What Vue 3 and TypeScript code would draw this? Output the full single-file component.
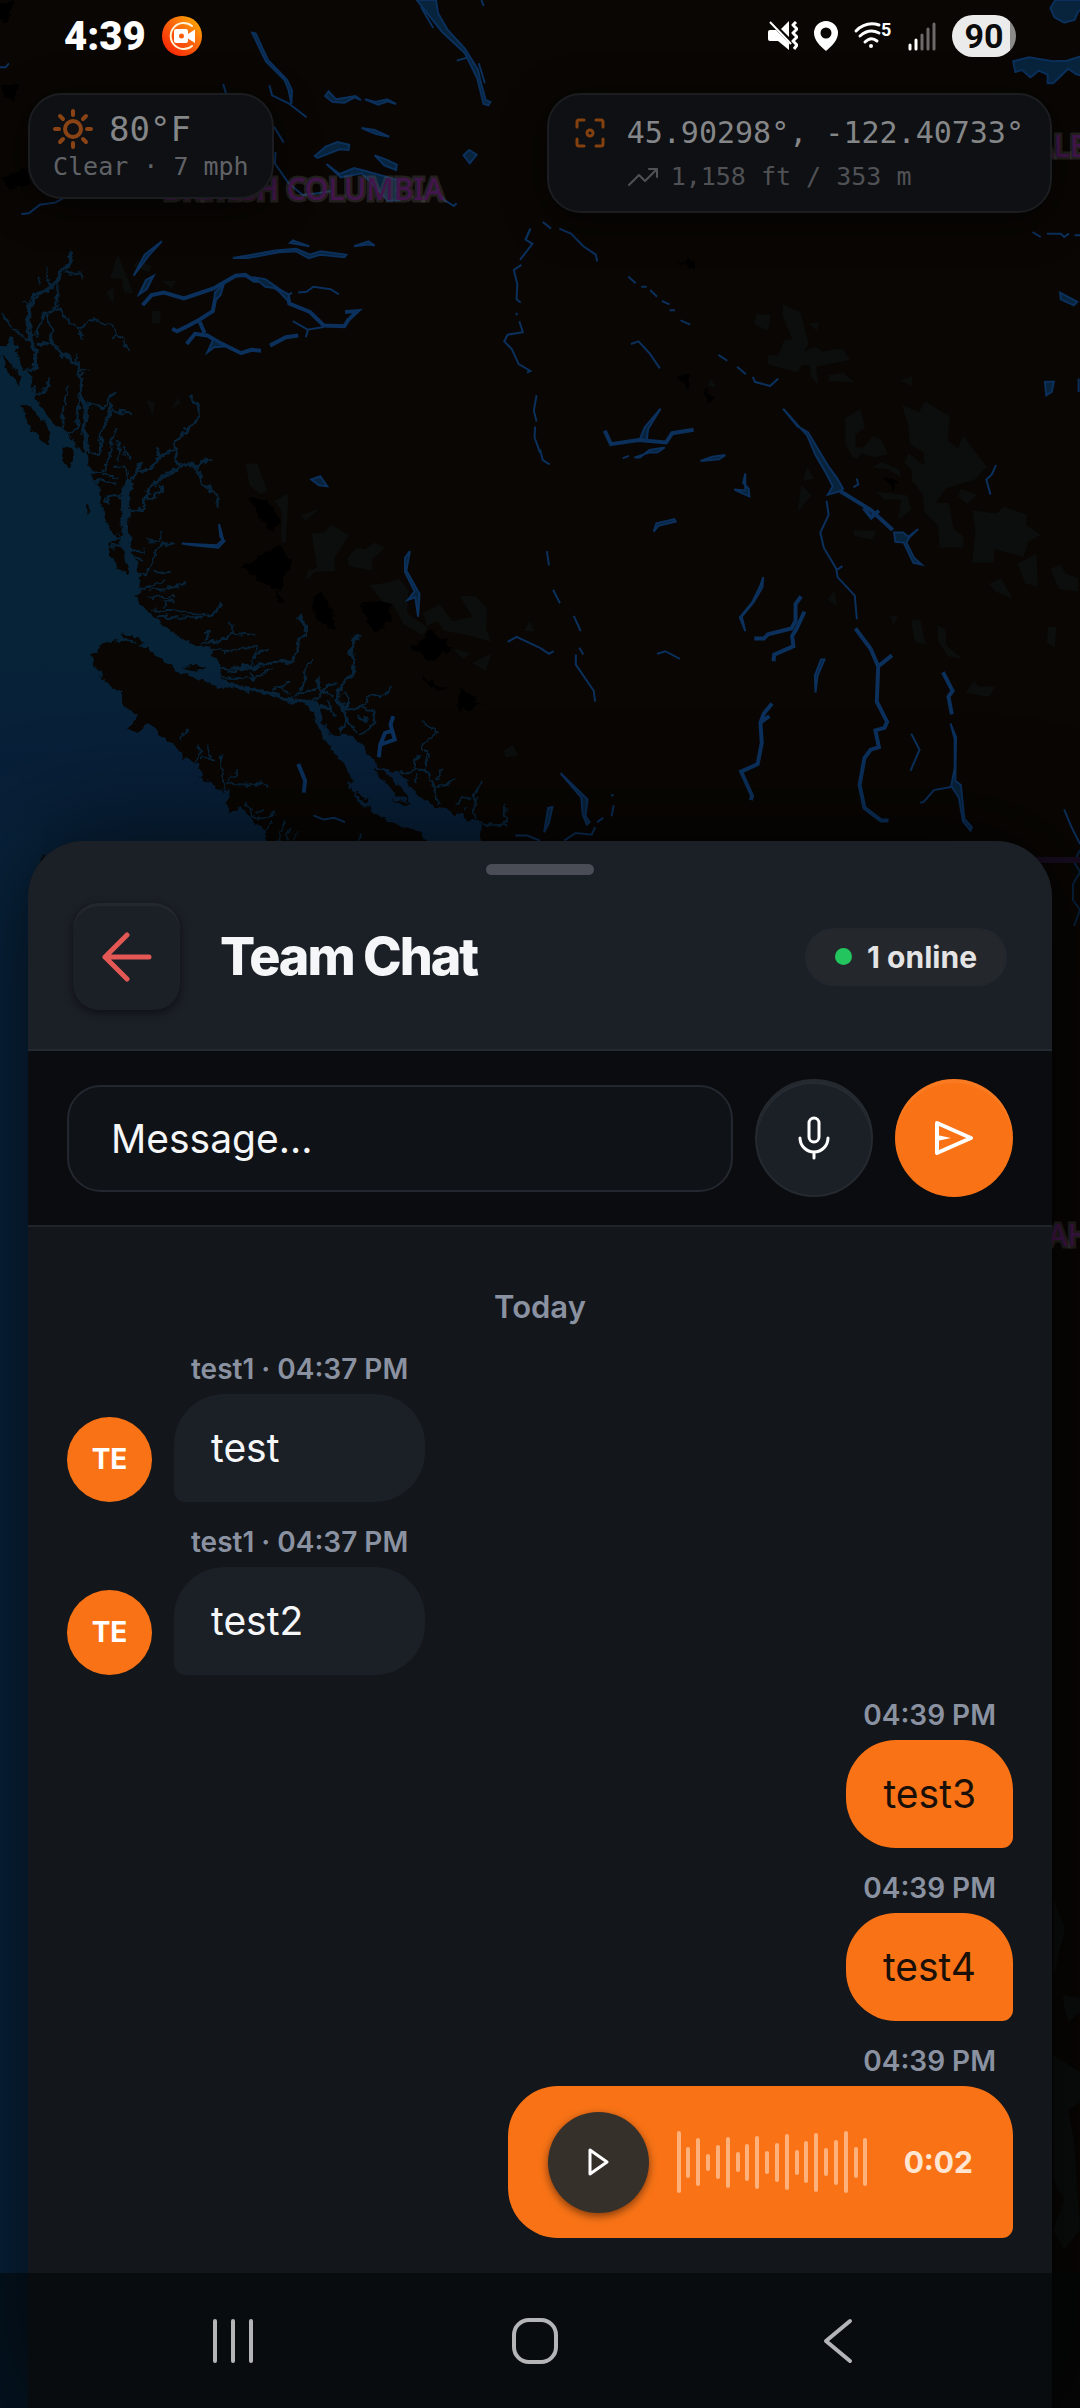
<script setup lang="ts">
interface Message {
  id: number
  time: string
  own: boolean
  author?: string
  text?: string
  voice?: string
}

const messages: Message[] = [
  { id: 1, author: 'test1', time: '04:37 PM', own: false, text: 'test' },
  { id: 2, author: 'test1', time: '04:37 PM', own: false, text: 'test2' },
  { id: 3, time: '04:39 PM', own: true, text: 'test3' },
  { id: 4, time: '04:39 PM', own: true, text: 'test4' },
  { id: 5, time: '04:39 PM', own: true, voice: '0:02' },
]

const waveform: number[] = [62, 31, 48, 17, 34, 51, 20, 37, 53, 23, 39, 56, 25, 42, 59, 28, 45, 62, 31, 48]

const initials = (name = ''): string => name.slice(0, 2).toUpperCase()
</script>

<template>
  <div class="screen">
    <svg class="map" viewBox="0 0 1080 2408" preserveAspectRatio="xMinYMin slice" aria-hidden="true">
      <defs>
        <filter id="rough" filterUnits="userSpaceOnUse" x="-40" y="0" width="1160" height="2408" color-interpolation-filters="sRGB">
          <feTurbulence type="fractalNoise" baseFrequency="0.12" numOctaves="3" seed="4" />
          <feDisplacementMap in="SourceGraphic" scale="9" xChannelSelector="R" yChannelSelector="G" />
        </filter>
        <linearGradient id="sea" gradientUnits="userSpaceOnUse" x1="0" y1="340" x2="0" y2="1600">
          <stop offset="0" stop-color="#072338" />
          <stop offset="0.6" stop-color="#072338" />
          <stop offset="0.8" stop-color="#081f38" />
          <stop offset="1" stop-color="#08233c" />
        </linearGradient>
      </defs>
      <rect width="1080" height="2408" fill="#090603" />

      <!-- coast and sea -->
      <g filter="url(#rough)">
        <g transform="translate(0 200) scale(0.3444 0.4209)">
          <path
            d="M-60 345 L20 345 34 320 52 370 66 405 86 410 102 470 150 530 196 548 232 596 252 606 262 650 290 690 300 750 330 790 352 800 356 690 376 640 380 700 374 790 388 840 410 890 395 940 425 975 470 1010 520 1036 570 1060 612 1068 650 1120 644 1140 720 1155 790 1168 840 1184 900 1188 924 1196 934 1240 966 1270 1020 1275 1066 1310 1100 1350 1160 1362 1200 1402 1240 1434 1290 1446 1350 1468 1400 1486 1390 1560 -60 1560 Z"
            fill="url(#sea)"
          />
          <path d="M-60 1500 H120 V5300 H-60 Z" fill="#08233c" />
          <g fill="#090603">
            <path d="M265 1080 L300 1058 350 1045 410 1058 462 1084 510 1116 570 1138 640 1156 720 1166 790 1182 830 1192 890 1198 912 1220 924 1256 960 1304 1000 1345 1030 1382 1008 1385 1040 1430 1100 1465 1160 1485 1220 1500 1250 1540 1240 1600 780 1600 770 1500 740 1478 700 1440 664 1458 660 1404 630 1402 590 1375 572 1332 530 1328 516 1300 480 1280 430 1240 400 1262 366 1260 405 1226 380 1212 350 1195 352 1168 300 1140 280 1110 Z" />
            <path d="M0 368 L30 385 60 418 62 440 30 420 Z" />
            <path d="M62 340 L84 348 96 380 90 406 70 402 56 370 Z" />
            <path d="M64 484 L94 496 130 530 146 550 138 588 110 562 84 536 Z" />
            <path d="M184 586 L208 590 212 616 202 640 188 624 Z" />
            <path d="M318 820 L346 800 358 840 374 888 344 876 320 850 Z" />
            <path d="M356 1032 L384 1034 420 1054 400 1056 Z M530 1110 L560 1104 596 1112 580 1120 Z M248 724 L258 728 252 748 Z" />
            <path d="M1084 1348 L1130 1368 1170 1400 1190 1430 1150 1412 1110 1378 Z M1138 1424 L1184 1430 1180 1442 Z M1034 1400 L1056 1424 1076 1420 1066 1434 1040 1420 Z" />
          </g>
        </g>

        <g class="inlet" transform="translate(0 240) scale(0.3333)">
          <path d="M216 36 L200 80 170 120 150 146 108 166 90 190 84 220 92 300 106 340 104 390" stroke-width="13" />
          <path d="M200 96 L248 108 M150 140 L136 84 M120 130 L116 110 M170 120 L174 160 168 200 188 228 240 268 276 240 330 252 350 284 372 304 386 336 M336 298 L350 284 M248 300 L240 268" />
          <path d="M168 206 L132 222 104 290 M136 222 L156 270 154 312 M110 310 L154 312 210 358 232 376 242 430 238 500 228 570" stroke-width="9" />
          <path d="M0 218 L60 284 96 306 M68 186 L88 196 M74 390 L100 394 M38 300 L20 320 M232 376 L228 344 M240 390 L266 388 M236 404 L258 400" />
          <path d="M210 440 L196 470 184 540 186 576 228 570 M192 460 L206 456 M102 470 L130 456 154 414 M102 470 L108 440" />
          <path d="M242 470 L260 500 252 560 262 640" stroke-width="14" />
          <path d="M262 496 L310 500 330 470 350 458 M330 490 L326 530 304 580 300 640 M334 512 L364 514 396 522" stroke-width="9" />
          <path d="M350 564 L336 600 340 630 310 690 270 700 M264 644 L300 640 M370 620 L388 660 M350 600 L360 640 352 660 M388 720 L376 680 340 680 M312 700 L350 716 M270 740 L300 720 352 734 M280 770 L300 740 M320 790 L330 765 380 768" stroke-width="7" />
          <path d="M382 800 L386 740 410 700 450 686 480 650 520 632 534 670 550 676 596 676 634 654 M530 630 L526 600 560 568 584 552 600 526 590 490 568 468 M480 650 L472 620 M410 700 L424 668" stroke-width="9" />
          <path d="M380 818 L430 808 438 760 480 716 548 676 M440 780 L460 766 484 756 480 732 M590 680 L606 724 640 764 656 780 658 806" stroke-width="9" />
          <path d="M400 1000 L440 1000 464 970 466 930 500 910 522 914 M438 900 L476 906 M484 876 V910 M460 996 L512 1000 M410 1056 L450 1040 492 1020 M450 1050 L500 1048 550 1036 560 1018 M440 1070 L520 1072 M450 1110 L600 1118 640 1124 662 1090 M470 1130 L600 1134 M490 1104 L494 1084 528 1084" stroke-width="6" />
          <path d="M376 740 L372 860 390 960 410 1010" stroke-width="22" />
          <path d="M332 920 H370 M400 930 L432 936 M404 950 L424 960" stroke-width="6" />
        </g>

        <g class="inlet" transform="translate(180 600) scale(0.3333)">
          <path d="M358 46 L376 80 376 104 350 124 352 160 334 186 270 188 220 200 130 208 M536 104 L510 144 526 180 518 226 480 262 474 300 496 340 500 370" stroke-width="10" />
          <path d="M120 10 L122 20 94 46 0 56 M0 34 L60 42 M70 100 L90 94 82 120 M60 130 L120 124 160 98 226 106 M152 66 L160 98 M130 160 L180 144 228 138 226 160 266 150 M226 160 L216 196 M60 140 L150 156 M140 220 L200 206 M130 232 L220 236 282 206 M220 236 L210 214" />
          <path d="M400 178 L380 192 374 230 360 270 M270 270 L310 260 326 246 M300 262 L330 282 M340 288 L380 276 420 264 440 280 460 290 M412 232 L414 262 M430 270 L450 250 466 256 M390 306 L420 290 430 270 M404 330 L446 320 466 350 M450 330 L440 300 M470 290 L500 330 540 324 574 286 610 284 636 258" stroke-width="7" />
          <path d="M270 276 L300 292 390 306 M404 320 L416 380 452 430" stroke-width="9" />
          <path d="M490 280 L504 300 500 326 M540 324 L580 330 582 370 540 406 M534 346 L556 372 M556 350 L550 370 M480 400 L500 360 530 400" stroke-width="8" />
          <path d="M724 360 L772 400 724 440 744 470 740 500 M700 510 L716 460 M660 520 L740 506 760 550 774 606 M764 560 L800 552 826 538 M770 540 L784 508 M706 550 L712 520" stroke-width="7" />
          <path d="M910 538 L890 570 880 620 890 660 M836 620 L850 590 876 596 M846 636 L860 620 M890 666 L980 680 M976 616 L976 656 960 676" stroke-width="8" />
          <path d="M0 420 L22 384 M40 480 L60 460 56 436 M60 474 L100 478 M84 440 L90 470 M122 460 L126 530 136 570 M140 550 L200 554 246 548 258 568 M150 540 L176 510 M200 610 L220 650 270 660 290 634 M230 640 L250 630 M256 690 L280 670 M290 720 L316 660 M320 720 L330 686 M340 722 L354 690 M536 696 V722" />
        </g>
      </g>

      <!-- glaciers -->
      <g filter="url(#rough)" fill="#000">
        <path d="M248 498 L268 500 280 520 274 532 258 516 Z M240 568 L280 544 292 562 280 590 266 584 Z M276 590 L286 604 280 606 Z" />
        <path d="M312 596 L320 590 332 610 334 630 316 618 Z M360 604 L390 600 392 620 374 632 Z M412 648 L430 630 454 648 430 662 Z" />
        <path d="M420 676 L446 688 436 690 Z M460 686 L466 694 482 704 458 712 Z M-4 4 L14 2 6 24 -4 20 Z M2 86 L18 84 14 100 4 96 Z M0 178 L26 168 30 184 10 190 Z" />
        <path d="M680 262 L696 260 694 270 Z M678 374 L690 376 688 388 Z M704 390 L716 396 708 402 Z M884 476 L898 482 892 490 Z M914 482 L930 484 922 494 Z M950 536 L964 540 958 546 Z" />
      </g>

      <!-- parks -->
      <g transform="translate(0 200) scale(0.3444 0.4209)" fill="#0b0e0d">
        <path d="M342 128 L388 222 360 220 354 188 320 186 Z M308 220 L330 206 330 246 Z M386 156 L400 144 440 156 434 172 Z M470 192 L512 192 498 210 Z M441 264 H466 V294 L441 292 Z" />
        <path d="M424 474 L450 482 444 514 Z M498 496 L518 468 526 484 Z M713 626 L748 626 776 690 758 700 724 678 Z M796 716 L838 696 830 814 816 814 818 738 Z M874 748 L928 734 886 764 Z" />
        <path d="M905 792 L940 790 964 772 1014 796 970 852 974 882 914 884 886 906 894 880 920 874 Z M1008 852 L1034 826 1060 830 1088 814 1118 826 1080 854 1082 880 1014 870 Z" />
        <path d="M1072 914 L1120 910 1158 900 1186 926 1182 982 1242 1016 1228 1034 1172 1008 1140 960 1110 954 Z M1228 980 L1278 960 1312 1000 1372 990 1334 940 1380 940 1414 970 1412 1020 1426 1050 1360 1034 1290 1024 1270 1000 1240 1012 Z" />
        <path d="M1316 1066 L1368 1076 1344 1090 Z M1370 1100 L1428 1076 1410 1118 Z M1522 1024 L1538 998 1552 1026 Z M1462 1308 L1490 1294 1504 1320 1468 1324 Z" />
      </g>
      <g transform="translate(540 200) scale(0.3444 0.4209)" fill="#0b0e0d">
        <path d="M628 270 L670 274 662 310 622 296 Z M706 248 L756 266 780 342 766 360 800 348 820 360 878 352 900 380 802 396 808 438 786 420 784 392 760 392 748 410 660 390 662 368 692 370 708 334 732 330 704 276 Z" />
        <path d="M780 292 L810 292 804 312 Z M838 416 L880 410 914 434 838 430 Z M1044 428 L1082 418 1080 442 Z M484 440 L498 424 512 446 Z" />
        <path d="M886 520 L930 496 944 540 916 558 916 586 936 590 968 560 992 570 1010 604 972 612 934 602 924 614 908 612 886 578 Z M964 636 L992 622 1044 640 1048 658 1010 640 Z" />
        <path d="M1050 486 L1100 504 1118 478 1190 514 1184 572 1214 590 1228 560 1298 634 1260 666 1180 684 1148 720 1188 720 1200 780 1230 800 1230 826 1160 826 1156 774 1116 742 1112 700 1080 668 1078 640 1058 624 1070 602 1116 630 1114 600 1074 580 1068 530 Z" />
        <path d="M974 692 L1068 702 1078 736 1040 760 1048 712 1000 712 Z M1212 704 L1222 686 1270 700 1240 722 Z M1256 738 L1326 744 1348 728 1414 748 1412 772 1456 796 1418 812 1404 848 1320 830 1318 862 1254 862 1264 790 Z" />
        <path d="M1386 864 L1442 840 1446 918 1410 912 Z M1304 912 L1338 898 1374 948 1322 930 Z M1482 876 L1510 866 1528 888 1562 898 1562 930 1506 924 Z M834 950 L856 926 862 964 Z M762 668 L776 634 796 662 Z M758 676 L788 702 748 742 Z M910 784 L978 786 966 808 912 798 Z" />
        <path d="M1016 988 L1040 988 1026 1010 Z M1078 998 L1104 996 1120 1056 1088 1050 Z M1154 1010 L1178 1020 1180 1058 1228 1092 1184 1084 1156 1048 Z M1474 1014 H1500 L1494 1064 1472 1052 Z M1236 1172 L1260 1142 1274 1156 1322 1156 1304 1180 Z" />
      </g>
      <path d="M1054 1900 L1065 1928 1054 1975 Z M1062 1995 L1080 1998 1080 2012 1068 2022 Z M1053 2055 L1080 2072 1080 2102 1068 2110 1074 2140 1080 2230 1064 2250 1053 2230 1064 2200 1054 2180 Z" fill="#0b0e0d" />

      <!-- lakes and rivers -->
      <g class="river" transform="scale(0.3444 0.3333)">
        <path class="lake" d="M732 98 L742 100 778 180 834 240 848 272 846 312 838 270 826 240 772 184 Z" />
        <path d="M648 252 L656 280 M782 256 L790 286 838 310 890 352 M796 380 L824 428 M800 456 L798 490 838 550 880 586 960 574" />
        <path class="lake" d="M944 288 L954 274 976 298 1032 288 1048 300 1030 292 1000 308 966 306 Z M1060 298 L1090 306 1124 298 1150 312 1126 304 1098 314 Z M1050 384 L1088 390 1130 410 1092 402 Z M914 468 L946 440 980 426 1014 434 1012 450 986 448 922 474 Z M1088 466 L1120 478 1152 494 1150 510 1116 496 Z M1346 466 L1362 450 1384 464 1364 490 Z" />
        <path class="lake" d="M948 492 L986 522 1028 504 1064 514 1160 542 1150 570 1160 600 1126 602 1080 550 1050 520 990 532 Z" />
        <path d="M1266 568 L1290 600 1318 618 1326 610 M62 642 L84 640 116 614 160 608 182 596 M0 202 L16 202 26 190" />
        <path class="lake" d="M1210 0 L1266 0 1272 40 1300 90 1350 146 1388 210 1394 238 1410 300 1424 306 1418 316 1404 312 1386 236 1350 160 1284 96 Z" />
        <path d="M1222 20 L1258 84 M1326 182 L1360 172 M1390 190 L1408 250 M1398 0 L1404 18 M1526 720 L1540 686" />
      </g>
      <g class="river" transform="translate(540 0) scale(0.3444 0.3333)">
        <path class="lake" d="M1496 0 L1580 0 1580 20 1562 36 1552 60 1522 68 1494 52 1482 24 Z M1374 184 L1420 172 1490 184 1530 182 1580 166 1580 230 1556 222 1534 206 1490 250 1474 250 1474 224 1448 212 1424 232 1400 210 1380 216 Z" />
      </g>
      <g class="river" transform="translate(0 200) scale(0.3444 0.4209)">
        <path class="lake" d="M388 180 L420 130 470 98 434 130 Z M404 224 L424 190 446 180 426 212 Z M676 138 L800 120 860 116 900 130 930 122 1006 130 1000 136 930 130 896 138 860 122 810 124 720 138 Z M842 102 L850 96 898 110 Z M1028 110 L1070 98 1088 108 1070 106 Z" />
        <path class="wide" d="M414 250 L440 226 476 220 534 234 620 210 650 196 684 180 712 178 738 192 770 192 836 228 840 246 900 266 940 298 1000 300 1010 286 1038 264 1002 266" />
        <path class="wide" d="M640 214 L624 238 618 264 580 284 548 298 514 312 500 306 M580 290 L594 316 M542 342 L566 318 602 322 640 340 700 364 730 356 758 358 M784 346 L830 326 866 322" />
        <path class="lake" d="M624 220 L650 200 640 226 622 240 Z M738 184 L770 188 808 210 770 206 Z M602 362 L620 330 650 348 622 350 Z M800 208 L838 224 836 240 Z" />
        <path d="M850 288 L894 308 888 326 M894 308 L940 302 M836 226 L848 220 M866 220 L890 218 910 206 960 212 984 224" />
        <path d="M1540 68 L1526 94 1546 104 1510 142 M1514 154 L1492 166 1502 200 1500 236 1512 244 M1500 268 V274 M1508 288 L1518 314 1474 320 1464 336 1486 354 1506 390 1540 406 1530 410 M1558 464 L1550 500 1558 526 M1554 538 L1552 564 1568 600" />
        <path class="lake" d="M904 664 L930 656 950 680 926 678 Z M528 816 L630 820 648 806 636 770 640 800 652 810 634 826 560 820 Z M1190 834 L1176 850 1176 884 1204 930 1184 950 1206 944 1214 990 1218 936 1180 880 Z" />
        <path class="wide" d="M1142 1226 L1134 1246 1146 1282 1104 1294 1100 1324 M1104 1294 L1118 1266 1136 1262 M866 1340 L886 1380 882 1408" />
        <path d="M910 1462 L940 1472 970 1468 1002 1478 M1474 1050 L1500 1038 1568 1064 M1496 1510 L1530 1510 1568 1522" />
      </g>
      <g class="river" transform="translate(540 200) scale(0.3444 0.4209)">
        <path d="M8 52 L32 68 M56 68 L90 80 126 110 162 130 166 146 M256 182 L278 198 M294 206 H310 M320 214 L340 230 M354 240 L376 248 M376 262 H392 M408 286 L436 296" />
        <path d="M264 342 L286 336 318 364 348 400 M518 368 L544 382 M572 396 L598 414 M618 420 L624 432 668 442 692 424" />
        <path class="wide" d="M188 548 L206 580 286 570 366 576 384 554 446 546" />
        <path class="lake" d="M350 496 L304 540 290 568 310 570 314 544 Z M240 614 L258 608 M274 612 L290 612 318 594 362 588 340 600 316 600 Z M466 620 L500 610 538 606 520 616 Z M596 650 L590 672 606 686 608 704 564 688 596 690 Z M330 788 L338 768 390 758 394 764 344 774 Z" />
        <path class="lake" d="M706 496 L748 538 778 552 812 598 840 636 862 660 880 686 870 692 836 700 850 680 830 648 800 606 776 560 Z" />
        <path class="wide" d="M872 692 L960 736 1024 784 M940 732 L962 754 984 738" />
        <path d="M832 714 L838 748 814 790 824 826 860 876 864 896 914 940 920 996 M860 880 L878 870 M910 682 L924 676 920 662" />
        <path class="lake" d="M1028 790 L1054 790 1070 800 1098 782 1072 802 1064 814 1086 850 1108 866 1084 862 1056 814 1032 812 Z M648 896 L646 920 620 956 586 990 596 1024 580 992 616 956 640 916 Z M826 1092 L806 1130 800 1170 798 1130 816 1092 Z" />
        <path class="wide" d="M622 1042 L650 1042 662 1032 730 1018 742 1000 742 960 758 942 M768 978 L744 1020 732 1036 736 1060 680 1080 678 1096" />
        <path class="wide" d="M916 1018 L960 1066 982 1108 1022 1082 M982 1108 L978 1192 1008 1240 1000 1254 974 1260 984 1300 960 1306 942 1326 928 1390 942 1444 990 1474 1012 1474" />
        <path class="wide" d="M674 1196 L650 1220 640 1242 644 1290 632 1340 584 1358 616 1416 612 1426 M640 1242 L666 1226 M1170 1122 L1198 1166 1186 1180 1196 1222" />
        <path class="lake" d="M1192 1244 L1208 1276 1206 1380 1222 1390 1232 1470 1254 1490 1250 1498 1228 1476 1216 1420 1194 1392 1204 1350 1204 1280 Z" />
        <path d="M1104 1432 L1114 1430 1144 1402 1196 1394" />
        <path d="M1078 1268 L1102 1306 1076 1356 M1324 630 L1312 652 1296 664 1308 700 M340 1078 L364 1072 406 1090 M20 834 L26 868 M38 926 L58 958 M98 988 L118 1024 M114 1064 L126 1080 M104 1080 V1104 L156 1166 160 1192 M0 1064 L26 1078 40 1072 M0 592 L8 618 28 628" />
        <path class="lake" d="M60 1362 L138 1424 132 1464 144 1478 136 1484 124 1460 120 1420 Z M36 1442 L26 1480 12 1502 24 1444 Z M1510 220 L1560 242 1550 250 1512 236 Z M1466 432 H1492 L1486 456 1470 464 Z" />
        <path d="M70 1522 L104 1504 150 1508 160 1490 M166 1478 L184 1468 M206 1414 H214 M214 1438 L208 1464 M1522 1448 L1540 1484 1568 1530 M1430 76 L1454 88 M1472 80 H1512 L1522 88 1536 80 M1552 84 H1568 M1564 424 V456" />
      </g>
      <path class="edge-river" d="M1080 850 L1074 862 1080 872 1073 884 1073 900 1080 910 1074 926" />
      <path d="M1030 860 H1080" stroke="#170c20" stroke-width="6" />

      <g class="place">
        <text x="163" y="200">BRITISH COLUMBIA</text>
        <text x="1034" y="157">ALBERTA</text>
        <text x="1016" y="1246">IDAHO</text>
      </g>
    </svg>

    <header class="status">
      <time class="clock">4:39</time>
      <svg class="recorder" viewBox="0 0 40 40" aria-hidden="true">
        <defs>
          <linearGradient id="rec" x1="1" y1="0" x2="0.2" y2="0.9">
            <stop offset="0" stop-color="#ffb800" />
            <stop offset="0.5" stop-color="#fb6a0c" />
            <stop offset="1" stop-color="#fb2c06" />
          </linearGradient>
        </defs>
        <circle cx="20" cy="20" r="20" fill="url(#rec)" />
        <path d="M30 10 A13 13 0 1 0 30 30" fill="none" stroke="#fff3d6" stroke-width="2" stroke-linecap="round" />
        <path fill="#fff" fill-rule="evenodd" d="M14 13 H24 Q26 13 26 15 V18 L33 13.500 V27 L26 22.500 V25 Q26 27 24 27 H14 Q12 27 12 25 V15 Q12 13 14 13 Z M19.500 17.500 A2.500 2.500 0 1 0 19.500 22.500 A2.500 2.500 0 1 0 19.500 17.500 Z" />
      </svg>
      <div class="status-icons">
        <svg width="30" height="30" viewBox="0 0 30 30" aria-hidden="true">
          <path d="M2 9 H8 L21 22 V29 L10 20 H2 Q0 20 0 18 V11 Q0 9 2 9 Z M21 0 V16 L13 8 Z" fill="#fff" />
          <path d="M2 1 L23 23" stroke="#fff" stroke-width="2" />
          <path d="M28 1 L25 4 L29 8 L25 12 L29 16 L25 20 L29 24 L26 28" fill="none" stroke="#fff" stroke-width="3" stroke-linejoin="round" />
        </svg>
        <svg width="24" height="30" viewBox="0 0 24 30" aria-hidden="true">
          <path fill="#fff" fill-rule="evenodd" d="M12 0 A12 12 0 0 1 24 12 C24 19 18 25 12 30 C6 25 0 19 0 12 A12 12 0 0 1 12 0 Z M12 6.500 A5.500 5.500 0 1 0 12 17.500 A5.500 5.500 0 1 0 12 6.500 Z" />
        </svg>
        <svg class="wifi" width="38" height="30" viewBox="0 0 38 30" aria-hidden="true">
          <g fill="none" stroke="#fff" stroke-width="3" stroke-linecap="round">
            <path d="M2 10 Q12 0 25 4" />
            <path d="M6 15 Q15 7 25 12" />
            <path d="M11 21 Q17 15 23 20" />
          </g>
          <circle cx="17" cy="25" r="2" fill="#fff" />
          <text x="27" y="15" fill="#fff" font-family="Roboto, sans-serif" font-size="18" font-weight="700">5</text>
        </svg>
        <svg width="28" height="30" viewBox="0 0 28 30" stroke-width="3" stroke-linecap="round" aria-hidden="true">
          <path d="M2 24 V28 M8 19 V28" stroke="#fff" />
          <path d="M14 14 V28 M20 8 V28 M26 3 V28" stroke="#6b6a68" />
        </svg>
        <span class="battery">90</span>
      </div>
    </header>

    <section class="hud">
      <div class="card weather">
        <div class="row">
          <svg width="40" height="40" viewBox="0 0 40 40" fill="none" stroke="#8a4314" stroke-width="4" stroke-linecap="round" aria-hidden="true">
            <circle cx="20" cy="20" r="8" />
            <path d="M20 2 V6 M20 34 V38 M2 20 H6 M34 20 H38 M7 7 L10 10 M30 30 L33 33 M7 33 L10 30 M30 10 L33 7" />
          </svg>
          <span class="temp">80°F</span>
        </div>
        <div class="conditions">Clear · 7 mph</div>
      </div>
      <div class="card position">
        <svg class="target" width="30" height="30" viewBox="0 0 30 30" fill="none" stroke="#84400f" stroke-width="3" stroke-linecap="round" stroke-linejoin="round" aria-hidden="true">
          <path d="M2 9 V4 Q2 2 4 2 H9 M21 2 H26 Q28 2 28 4 V9 M28 21 V26 Q28 28 26 28 H21 M9 28 H4 Q2 28 2 26 V21" />
          <circle cx="15" cy="15" r="3" />
        </svg>
        <div>
          <div class="coords">45.90298°, -122.40733°</div>
          <div class="elevation">
            <svg width="32" height="20" viewBox="0 0 32 20" fill="none" stroke="#505154" stroke-width="2" stroke-linecap="round" stroke-linejoin="round" aria-hidden="true">
              <path d="M2 18 L12 8 L18 14 L30 2 M22 2 H30 V10" />
            </svg>
            <span>1,158 ft / 353 m</span>
          </div>
        </div>
      </div>
    </section>

    <main class="sheet">
      <div class="sheet-head">
        <div class="handle"></div>
        <div class="title-row">
          <button class="back" type="button" aria-label="Back">
            <svg width="50" height="50" viewBox="0 0 50 50" fill="none" stroke="#e35754" stroke-width="5" stroke-linecap="round" stroke-linejoin="round">
              <path d="M47 25 H3 M25 3 L3 25 L25 47" />
            </svg>
          </button>
          <h1>Team Chat</h1>
          <div class="online"><i class="dot"></i>1 online</div>
        </div>
      </div>

      <form class="compose" @submit.prevent>
        <input class="field" type="text" placeholder="Message..." aria-label="Message" />
        <button class="round mic" type="button" aria-label="Record voice message">
          <svg width="32" height="44" viewBox="0 0 32 44" fill="none" stroke="#fff" stroke-width="3" stroke-linecap="round">
            <rect x="11" y="2" width="10" height="24" rx="5" />
            <path d="M2 22 A14 14 0 0 0 30 22 M16 36 V42" />
          </svg>
        </button>
        <button class="round send" type="submit" aria-label="Send">
          <svg width="40" height="34" viewBox="0 0 40 34" fill="none" stroke="#fff" stroke-width="4" stroke-linejoin="round">
            <path d="M3 2 L37 17 L3 32 Z" />
            <path d="M3 14 L17 17 L3 20 Z" fill="#fff" stroke="none" />
          </svg>
        </button>
      </form>

      <section class="feed">
        <div class="day">Today</div>
        <article v-for="m in messages" :key="m.id" class="message" :class="{ own: m.own }">
          <div v-if="!m.own" class="avatar">{{ initials(m.author) }}</div>
          <div class="body">
            <div class="meta"><template v-if="m.author">{{ m.author }} · </template>{{ m.time }}</div>
            <div v-if="m.voice" class="bubble voice">
              <button class="play" type="button" aria-label="Play voice message">
                <svg width="22" height="30" viewBox="0 0 22 30" fill="none" stroke="#fff" stroke-width="3" stroke-linejoin="round">
                  <path d="M3 3 L20 15 L3 27 Z" />
                </svg>
              </button>
              <div class="wave">
                <i v-for="(h, i) in waveform" :key="i" :style="{ height: h + 'px' }"></i>
              </div>
              <span class="duration">{{ m.voice }}</span>
            </div>
            <div v-else class="bubble">{{ m.text }}</div>
          </div>
        </article>
      </section>
    </main>

    <nav class="system-nav">
      <button type="button" aria-label="Recent apps">
        <svg width="46" height="48" viewBox="0 0 46 48" fill="none" stroke="#b4b5b6" stroke-width="4" stroke-linecap="round">
          <path d="M5 4 V44 M23 4 V44 M41 4 V44" />
        </svg>
      </button>
      <button type="button" aria-label="Home">
        <svg width="48" height="48" viewBox="0 0 48 48" fill="none" stroke="#b4b5b6" stroke-width="4">
          <rect x="3" y="3" width="42" height="42" rx="15" />
        </svg>
      </button>
      <button type="button" aria-label="Back">
        <svg width="32" height="48" viewBox="0 0 32 48" fill="none" stroke="#b4b5b6" stroke-width="4" stroke-linecap="round" stroke-linejoin="round">
          <path d="M28 4 L4 24 L28 44" />
        </svg>
      </button>
    </nav>
  </div>
</template>

<style>
body {
  margin: 0;
  background: #090603;
}
</style>

<style scoped>
* {
  box-sizing: border-box;
}

button {
  padding: 0;
  border: 0;
  background: none;
  display: flex;
  align-items: center;
  justify-content: center;
}

.screen {
  position: relative;
  min-height: 100vh;
  overflow: hidden;
  display: flex;
  flex-direction: column;
  font-family: Inter, 'Liberation Sans', sans-serif;
  color: #f5f6f8;
}

.map {
  position: absolute;
  inset: 0;
  width: 100%;
  height: 100%;
}

.inlet {
  fill: none;
  stroke: #082338;
  stroke-width: 6;
}

.river path {
  fill: none;
  stroke: #0b305c;
  stroke-width: 2;
  vector-effect: non-scaling-stroke;
}

.river path.wide {
  stroke-width: 4;
}

.river path.lake {
  fill: #08233c;
}

.edge-river {
  fill: none;
  stroke: #07223e;
  stroke-width: 2;
}

.place text {
  font: 500 30px 'Noto Sans', 'Open Sans', sans-serif;
  fill: #42164c;
  stroke: rgba(90, 84, 88, 0.35);
  stroke-width: 5;
  paint-order: stroke;
}

.status {
  position: relative;
  height: 72px;
  padding: 0 64px;
  display: flex;
  align-items: center;
}

.clock {
  font-family: Roboto, Inter, sans-serif;
  font-size: 40px;
  font-weight: 900;
  color: #fff;
}

.recorder {
  width: 40px;
  height: 40px;
  margin-left: 16px;
}

.status-icons {
  margin-left: auto;
  display: flex;
  align-items: center;
  gap: 16px;
}

.wifi {
  overflow: visible;
}

.battery {
  width: 64px;
  height: 42px;
  border-radius: 21px;
  background: linear-gradient(90deg, #ebebeb 90%, #8c8b8a 90%);
  color: #0b0b0b;
  font-family: Roboto, Inter, sans-serif;
  font-size: 34px;
  font-weight: 700;
  line-height: 42px;
  text-align: center;
}

.hud {
  position: relative;
  padding: 21px 28px 0;
  display: flex;
  justify-content: space-between;
  align-items: flex-start;
  font-family: 'DejaVu Sans Mono', 'Liberation Mono', monospace;
}

.card {
  border: 2px solid #1b1d20;
  border-radius: 34px;
  background: #0e1014;
  box-shadow: 0 8px 40px rgba(0, 0, 0, 0.5);
}

.weather {
  padding: 14px 23px 12px;
}

.row {
  display: flex;
  align-items: center;
  gap: 16px;
  height: 40px;
}

.temp {
  font-size: 34px;
  line-height: 40px;
  color: #858688;
}

.conditions {
  font-size: 25px;
  line-height: 36px;
  color: #606266;
}

.position {
  display: flex;
  align-items: flex-start;
  gap: 22px;
  padding: 20px 26px 16px;
}

.target {
  margin-top: 3px;
}

.coords {
  font-size: 30px;
  line-height: 36px;
  color: #858688;
}

.elevation {
  display: flex;
  align-items: center;
  gap: 12px;
  margin-top: 8px;
  font-size: 25px;
  line-height: 36px;
  color: #505154;
}

.sheet {
  position: relative;
  margin: auto 28px 0;
  padding-bottom: 135px;
  border-radius: 56px 56px 0 0;
  background: #13161a;
  box-shadow: 0 0 110px rgba(0, 0, 0, 0.7);
}

.sheet-head {
  padding: 23px 45px 39px;
  border-bottom: 2px solid #242a31;
  border-radius: 56px 56px 0 0;
  background: #1b1f26;
}

.handle {
  width: 108px;
  height: 11px;
  margin: 0 auto 28px;
  border-radius: 6px;
  background: #4b4d56;
}

.title-row {
  display: flex;
  align-items: center;
}

.back {
  width: 107px;
  height: 107px;
  border-radius: 26px;
  background: #1b1f26;
  box-shadow: 0 3px 8px rgba(0, 0, 0, 0.5), inset 0 3px 0 rgba(255, 255, 255, 0.04);
}

h1 {
  margin: 0 0 0 40px;
  font-size: 52px;
  font-weight: 800;
  line-height: 64px;
  letter-spacing: -2px;
}

.online {
  display: flex;
  align-items: center;
  gap: 15px;
  height: 58px;
  margin-left: auto;
  padding: 0 28px;
  border: 2px solid #22272e;
  border-radius: 29px;
  background: #24272b;
  color: #e4e4e5;
  font-size: 30px;
  font-weight: 700;
}

.dot {
  width: 17px;
  height: 17px;
  border-radius: 50%;
  background: #22c55e;
}

.compose {
  display: flex;
  align-items: center;
  gap: 22px;
  padding: 28px 39px;
  border-bottom: 2px solid #20252b;
  background: #0a0c0f;
}

.field {
  flex: 1;
  min-width: 0;
  height: 107px;
  padding: 0 42px;
  border: 2px solid #23272f;
  border-radius: 34px;
  background: #0f1216;
  color: #f5f6f8;
  font-family: inherit;
  font-size: 39px;
}

.field::placeholder {
  color: #f5f6f8;
  opacity: 1;
}

.round {
  flex: none;
  width: 118px;
  height: 118px;
  border-radius: 50%;
}

.mic {
  border: 2px solid #252a31;
  background: #1b1f26;
  box-shadow: inset 0 3px 0 rgba(255, 255, 255, 0.05);
}

.send {
  background: #f97316;
  box-shadow: inset 0 4px 0 rgba(255, 255, 255, 0.05);
}

.feed {
  padding: 62px 39px 35px;
  display: flex;
  flex-direction: column;
  gap: 23px;
}

.day {
  margin-bottom: 4px;
  font-size: 31px;
  font-weight: 600;
  line-height: 36px;
  text-align: center;
  color: #8a92a1;
}

.message {
  display: flex;
  align-items: flex-end;
  gap: 22px;
}

.own {
  justify-content: flex-end;
}

.avatar {
  width: 85px;
  height: 85px;
  border-radius: 50%;
  background: #f97316;
  font-size: 28px;
  font-weight: 700;
  line-height: 85px;
  text-align: center;
  color: #fff;
}

.body {
  display: flex;
  flex-direction: column;
  gap: 8px;
}

.own .body {
  align-items: flex-end;
}

.meta {
  padding: 0 17px;
  font-size: 28px;
  font-weight: 600;
  line-height: 34px;
  color: #8a92a1;
}

.bubble {
  padding: 0 37px;
  border-radius: 50px 50px 50px 11px;
  background: #1b1f26;
  font-size: 39px;
  line-height: 108px;
}

.own .bubble {
  border-radius: 50px 50px 11px 50px;
  background: #f97316;
  color: #1a1008;
}

.own .voice {
  display: flex;
  align-items: center;
  height: 152px;
  padding: 0 40px;
}

.play {
  width: 101px;
  height: 101px;
  border-radius: 50%;
  background: #36302b;
  box-shadow: 0 3px 8px rgba(0, 0, 0, 0.5);
}

.wave {
  display: flex;
  align-items: center;
  justify-content: space-between;
  width: 191px;
  margin: 0 36px 0 28px;
}

.wave i {
  width: 4px;
  border-radius: 2px;
  background: #ffb17c;
}

.duration {
  font-size: 30px;
  font-weight: 700;
  color: #ffe6d3;
}

.system-nav {
  position: absolute;
  left: 0;
  right: 0;
  bottom: 0;
  height: 135px;
  padding: 0 91px 0 82px;
  display: grid;
  grid-template-columns: repeat(3, 1fr);
  background: rgba(1, 5, 7, 0.55);
}
</style>
